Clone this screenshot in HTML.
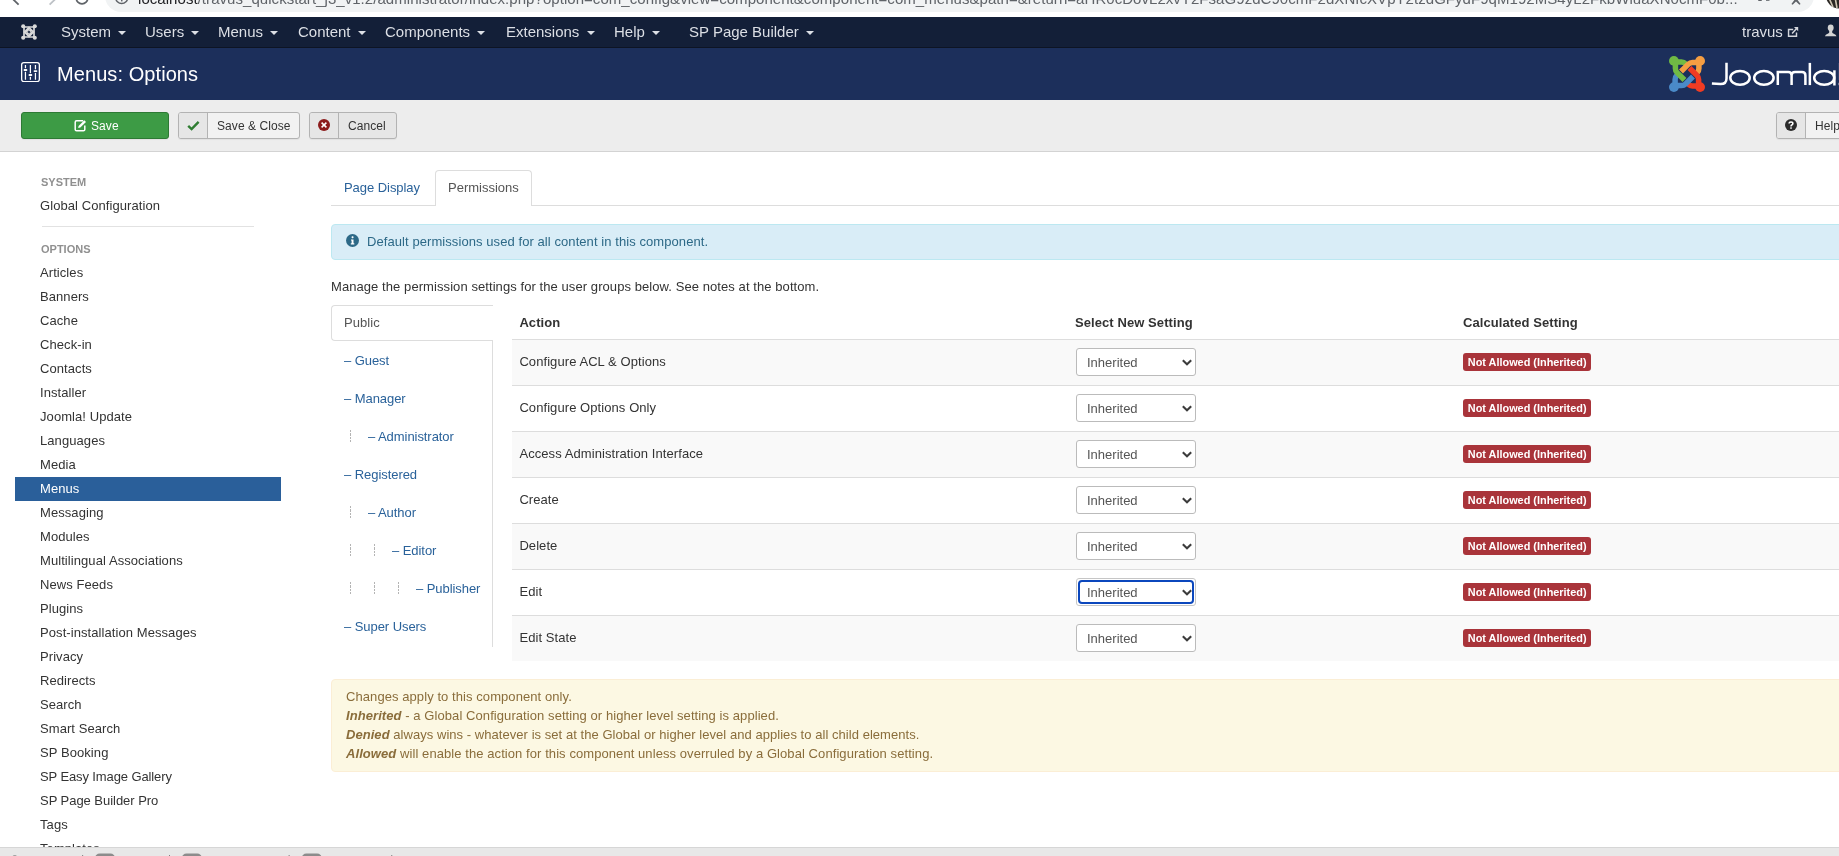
<!DOCTYPE html>
<html>
<head>
<meta charset="utf-8">
<title>Menus: Options</title>
<style>
*{box-sizing:border-box;margin:0;padding:0}
html,body{width:1839px;height:856px;overflow:hidden;background:#fff}
body{font-family:"Liberation Sans",sans-serif;font-size:13px;line-height:18px;color:#333;position:relative;letter-spacing:0.075px}
#root{position:absolute;left:0;top:0;width:1839px;height:856px;overflow:hidden;will-change:transform}
.abs{position:absolute}
/* browser chrome */
#chrome{left:0;top:0;width:1839px;height:17px;background:#fff;overflow:hidden}
#urlbar{left:105px;top:-20px;width:1709px;height:32px;border-radius:16px;background:#f1f3f4}
#url{left:138px;top:-10px;width:1587px;overflow:hidden;font-size:15px;line-height:18px;white-space:nowrap;color:#5f6368;letter-spacing:0.05px}
#url b{font-weight:normal;color:#202124}
/* nav */
#nav{left:0;top:17px;width:1839px;height:31px;background:#131f38;border-bottom:1px solid #0d1424}
#nav .mi{position:absolute;top:6px;font-size:15px;line-height:18px;color:#dcdfe5;white-space:nowrap;letter-spacing:0}
#nav .car{display:inline-block;width:0;height:0;border-left:4px solid transparent;border-right:4px solid transparent;border-top:4px solid #dcdfe5;vertical-align:middle;margin-left:3px;margin-top:-1px}
/* header */
#header{left:0;top:48px;width:1839px;height:52px;background:#1c2f5b}
#title{left:57px;top:62px;font-size:20px;line-height:24px;color:#fff;white-space:nowrap}
/* toolbar */
#toolbar{left:0;top:100px;width:1839px;height:52px;background:#ededed;border-bottom:1px solid #d3d3d3}
.btn{position:absolute;top:112px;height:27px;border:1px solid #b3b3b3;border-radius:3px;background:#e6e6e6;font-size:12px;line-height:18px;color:#333;white-space:nowrap;overflow:hidden;box-shadow:0 1px 1px rgba(0,0,0,.05)}
.btn .ic{position:absolute;left:0;top:0;bottom:0;width:29px;background:#e6e6e6;border-right:1px solid #b3b3b3}
.btn .tx{position:absolute;top:4px}
/* sidebar */
.sh{position:absolute;left:41px;font-size:11px;font-weight:bold;color:#909090;line-height:18px;letter-spacing:0}
.si{position:absolute;left:40px;color:#333;white-space:nowrap;line-height:18px}
/* content */
a,.lnk{color:#2a629a}

/* tabs */
#tabline{left:331px;top:205px;width:1520px;height:1px;background:#ddd}
#tab1{left:344px;top:179px;color:#2a629a;letter-spacing:-0.05px}
#tab2{left:435px;top:170px;width:97px;height:36px;border:1px solid #ddd;border-bottom:0;border-radius:4px 4px 0 0;background:#fff}
#tab2 span{position:absolute;left:12px;top:8px;color:#555;letter-spacing:0}
#info{left:331px;top:224px;width:1530px;height:36px;background:#d9edf7;border:1px solid #bce8f1;border-radius:4px;color:#2d6987}
#info span{position:absolute;left:35px;top:8px;white-space:nowrap}
#manage{left:331px;top:278px;white-space:nowrap;color:#333}
#pub{left:331px;top:305px;width:162px;height:36px;border:1px solid #ddd;border-right:0;border-radius:4px 0 0 4px;background:#fff}
#pub span{position:absolute;left:12px;top:8px;color:#555}
#vline{left:492px;top:340px;width:1px;height:307px;background:#ddd}
.g{position:absolute;color:#2a629a;white-space:nowrap;letter-spacing:-0.06px}
.lv{position:absolute;width:1px;height:12.2px;background:repeating-linear-gradient(to bottom,#b4b4b4 0,#b4b4b4 2.2px,transparent 2.2px,transparent 3.33px)}
/* table */
.th{position:absolute;top:314px;font-weight:bold;color:#333;white-space:nowrap}
.row{position:absolute;left:512px;width:1340px;height:46px;border-top:1px solid #ddd}
.row.odd{background:#f9f9f9}
.row .a{position:absolute;left:7.4px;top:13px;white-space:nowrap}
.sel{position:absolute;left:564px;top:8px;width:120px;height:28px;border:1px solid #bbb;border-radius:3px;background:#fff}
.sel span{position:absolute;left:10px;top:5px;font-size:13px;color:#555;line-height:18px;letter-spacing:0}
.sel svg{position:absolute;left:105px;top:9.5px}
.lab{position:absolute;left:951.4px;top:13px;width:127.6px;height:17.5px;border-radius:3px;background:#a9343a;color:#fff;font-weight:bold;font-size:10.9px;line-height:18px;letter-spacing:0;text-align:center;white-space:nowrap}
.sel.focus{border-color:#c6c6c6}
.sel.focus:after{content:"";position:absolute;left:1px;top:1px;right:1px;bottom:1px;border:2px solid #0b47bd;border-radius:4px}
#warn{left:331px;top:679px;width:1530px;height:93px;background:#fcf8e3;border:1px solid #fbeed5;border-radius:4px;color:#8a6d3b;line-height:19px}
#warn div{position:absolute;left:14px;white-space:nowrap}
#status{left:0;top:847px;width:1839px;height:9px;background:#e8e8e8;border-top:1px solid #d6d6d6}
</style>
</head>
<body>
<div id="root">
<!-- browser chrome strip -->
<div id="chrome" class="abs">
  <div id="urlbar" class="abs"></div>
  <svg class="abs" style="left:0;top:0" width="1839" height="17" viewBox="0 0 1839 17">
    <path d="M12.8 -1 L18.6 4.6" stroke="#5f6368" stroke-width="1.8" fill="none"/>
    <path d="M55.4 -1 L49.6 4.6" stroke="#bdc1c6" stroke-width="1.8" fill="none"/>
    <circle cx="82" cy="-2" r="5.8" stroke="#5f6368" stroke-width="1.7" fill="none"/>
    <circle cx="121.7" cy="-2.4" r="6" stroke="#5f6368" stroke-width="1.5" fill="none"/>
    <rect x="121" y="-3" width="1.5" height="4.4" fill="#5f6368"/>
    <rect x="1758" y="-1" width="4" height="2" rx="1" fill="#5f6368"/>
    <rect x="1766" y="-1" width="3.5" height="1.8" fill="#5f6368"/>
    <path d="M1796 -1 L1792 4.4 M1796 -1 L1800 4.4 M1796 0.5 L1792.4 3.9 M1796 0.5 L1799.6 3.9" stroke="#5f6368" stroke-width="1.4" fill="none"/>
    <circle cx="1839" cy="-4.5" r="13" fill="#2b2724"/>
    <path d="M1829 -2 L1833 7 M1835 -3 L1837 8" stroke="#cfc6b4" stroke-width="1.6" fill="none"/>
  </svg>
  <div id="url" class="abs"><b>localhost</b>/travus_quickstart_j3_v1.2/administrator/index.php?option=com_config&amp;view=component&amp;component=com_menus&amp;path=&amp;return=aHR0cDovL2xvY2FsaG9zdC90cmF2dXNfcXVpY2tzdGFydF9qM192MS4yL2FkbWluaXN0cmF0b3IvaW5kZXgucGhwP29wdGlvbj1jb21fbWVudXM</div>
  <div class="abs" style="left:1725px;top:-10px;font-size:15px;line-height:18px;color:#5f6368">...</div>
</div>

<div id="nav" class="abs">
  <svg class="abs" style="left:21px;top:7px" width="16" height="16" viewBox="0 0 16 16"><g fill="none" stroke="#d9d9d9"><rect x="3" y="3" width="10" height="10" rx="1.2" stroke-width="1.7"/><path d="M8 4.5 L11.5 8 L8 11.5 L4.5 8 Z" stroke-width="3.1" stroke-linejoin="miter"/></g><g fill="#d9d9d9"><circle cx="2.2" cy="2.2" r="2.05"/><circle cx="13.8" cy="2.2" r="2.05"/><circle cx="2.2" cy="13.8" r="2.05"/><circle cx="13.8" cy="13.8" r="2.05"/></g><path d="M5.2 8.9 L8.9 5.2 M7.1 10.8 L10.8 7.1" stroke="#131f38" stroke-width="0.35" opacity="0.6"/></svg>
  <div class="mi" style="left:61px">System <i class="car"></i></div>
  <div class="mi" style="left:145px">Users <i class="car"></i></div>
  <div class="mi" style="left:218px">Menus <i class="car"></i></div>
  <div class="mi" style="left:298px">Content <i class="car"></i></div>
  <div class="mi" style="left:385px">Components <i class="car"></i></div>
  <div class="mi" style="left:506px">Extensions <i class="car"></i></div>
  <div class="mi" style="left:614px">Help <i class="car"></i></div>
  <div class="mi" style="left:689px">SP Page Builder <i class="car"></i></div>
  <div class="mi" style="left:1742px">travus</div>
  <svg class="abs" style="left:1786px;top:8px" width="14" height="14" viewBox="0 0 14 14"><path d="M7.2 4.5 H2.55 V11.3 H10.5 V7.6" fill="none" stroke="#d3d6dc" stroke-width="1.45"/><path d="M6.1 8.4 L10.6 3.6" stroke="#d3d6dc" stroke-width="1.5" fill="none"/><path d="M7.9 2 H12.2 V6.3 Z" fill="#d3d6dc"/></svg>
  <svg class="abs" style="left:1824px;top:7px" width="14" height="13" viewBox="0 0 14 13"><ellipse cx="6.7" cy="3.8" rx="2.95" ry="3.4" fill="#d3d3d3"/><path d="M5.2 6 H8.2 V8.6 Q8.3 9.2 9.3 9.6 Q12.2 10.6 12.5 12.2 H0.9 Q1.2 10.6 4.1 9.6 Q5.1 9.2 5.2 8.6 Z" fill="#d3d3d3"/></svg>
</div>
<div id="header" class="abs"></div>
<svg class="abs" style="left:21px;top:62px" width="19" height="20" viewBox="0 0 19 20"><rect x="0.65" y="0.65" width="17.7" height="18.9" rx="2.2" fill="none" stroke="#fff" stroke-width="1.3"/><g stroke="#fff" stroke-width="1.25"><path d="M4.45 3 V17.8 M9.4 3 V17.8 M14.45 3 V17.8"/></g><g fill="#1c2f5b"><rect x="3" y="6.2" width="3" height="3.6"/><rect x="8" y="11.2" width="3" height="3.6"/><rect x="13" y="7.3" width="3" height="3.6"/></g><g fill="#fff"><rect x="2.6" y="7.1" width="3.7" height="1.9" rx="0.8"/><rect x="7.55" y="12.1" width="3.7" height="1.9" rx="0.8"/><rect x="12.6" y="8.2" width="3.7" height="1.9" rx="0.8"/></g></svg>
<svg class="abs" style="left:1669px;top:56px;overflow:visible" width="36" height="36" viewBox="0 0 36 36"><g transform="rotate(0 18 18)" fill="none" stroke="#70ba44" stroke-width="5.5" stroke-linejoin="round"><circle cx="4.9" cy="4.9" r="4.9" fill="#70ba44" stroke="none"/><path d="M5 6.1 L12.5 6.1 Q15 6.1 16.8 7.9 L19 10.1"/></g><g transform="rotate(90 18 18)" fill="none" stroke="#f59e42" stroke-width="5.5" stroke-linejoin="round"><circle cx="4.9" cy="4.9" r="4.9" fill="#f59e42" stroke="none"/><path d="M5 6.1 L12.5 6.1 Q15 6.1 16.8 7.9 L19 10.1"/></g><g transform="rotate(180 18 18)" fill="none" stroke="#f03c23" stroke-width="5.5" stroke-linejoin="round"><circle cx="4.9" cy="4.9" r="4.9" fill="#f03c23" stroke="none"/><path d="M5 6.1 L12.5 6.1 Q15 6.1 16.8 7.9 L19 10.1"/></g><g transform="rotate(270 18 18)" fill="none" stroke="#4a8ac8" stroke-width="5.5" stroke-linejoin="round"><circle cx="4.9" cy="4.9" r="4.9" fill="#4a8ac8" stroke="none"/><path d="M5 6.1 L12.5 6.1 Q15 6.1 16.8 7.9 L19 10.1"/></g><g transform="rotate(0 18 18)" fill="none" stroke="#70ba44" stroke-width="5.5" stroke-linejoin="round"><path d="M6.4 5 L6.4 12.5 Q6.4 14.9 8.1 16.6 L15.5 24"/></g><g transform="rotate(90 18 18)" fill="none" stroke="#f59e42" stroke-width="5.5" stroke-linejoin="round"><path d="M6.4 5 L6.4 12.5 Q6.4 14.9 8.1 16.6 L15.5 24"/></g><g transform="rotate(180 18 18)" fill="none" stroke="#f03c23" stroke-width="5.5" stroke-linejoin="round"><path d="M6.4 5 L6.4 12.5 Q6.4 14.9 8.1 16.6 L15.5 24"/></g><g transform="rotate(270 18 18)" fill="none" stroke="#4a8ac8" stroke-width="5.5" stroke-linejoin="round"><path d="M6.4 5 L6.4 12.5 Q6.4 14.9 8.1 16.6 L15.5 24"/></g></svg>
<svg class="abs" style="left:1669px;top:56px" width="170" height="36" viewBox="0 0 170 36"><g fill="none" stroke="#fff" stroke-width="2.5"><path d="M57.5 6.8 V22.5 Q57.5 28.1 51.5 28.1 L42.9 27.6"/><ellipse cx="71" cy="21.85" rx="9.7" ry="6.9"/><ellipse cx="94.9" cy="21.85" rx="9.7" ry="6.9"/><path d="M108.8 29.1 V16 H119.2 Q122.6 16 122.6 19.4 V29.1 M122.6 19.4 Q122.6 16 126 16 H133 Q136.4 16 136.4 19.4 V29.1"/><path d="M140.85 6.9 V29.1"/><ellipse cx="155.2" cy="21.85" rx="10" ry="6.9"/><path d="M165.4 14.3 V29.5"/></g><rect x="169.2" y="7" width="3" height="17" fill="#fff" opacity="0.12"/><rect x="169.2" y="26.8" width="3" height="2.4" fill="#fff" opacity="0.45"/></svg>
<div id="title" class="abs">Menus: Options</div>
<div id="toolbar" class="abs"></div>
<!-- toolbar buttons -->
<div class="btn" style="left:21px;width:148px;background:#3d9b45;border-color:#2d7a34;color:#fff">
  <svg class="abs" style="left:51.5px;top:5.6px" width="13" height="13" viewBox="0 0 13 13"><path d="M9.2 1.8 H2.6 Q1.2 1.8 1.2 3.2 V10.4 Q1.2 11.8 2.6 11.8 H9.4 Q10.8 11.8 10.8 10.4 V6.6" fill="none" stroke="#fff" stroke-width="1.5"/><path d="M4.6 6.9 L10.3 1.2 L12 2.9 L6.3 8.6 L4.2 9 Z" fill="#fff"/></svg>
  <span class="tx" style="left:69px">Save</span>
</div>
<div class="btn" style="left:178px;width:122px;background:#f2f2f2">
  <div class="ic"></div>
  <svg class="abs" style="left:8px;top:7px" width="13" height="11" viewBox="0 0 13 11"><path d="M1.2 5.8 L4.6 9 L11.6 1.8" fill="none" stroke="#2f7d32" stroke-width="2.4"/></svg>
  <span class="tx" style="left:38px">Save &amp; Close</span>
</div>
<div class="btn" style="left:309px;width:88px">
  <div class="ic"></div>
  <svg class="abs" style="left:8px;top:6px" width="12" height="12" viewBox="0 0 12 12"><circle cx="6" cy="6" r="6" fill="#8c1c1c"/><path d="M3.6 3.6 L8.4 8.4 M8.4 3.6 L3.6 8.4" stroke="#fff" stroke-width="1.5"/></svg>
  <span class="tx" style="left:38px">Cancel</span>
</div>
<div class="btn" style="left:1776px;width:90px;background:#f2f2f2">
  <div class="ic"></div>
  <svg class="abs" style="left:8px;top:6px" width="12" height="12" viewBox="0 0 12 12"><circle cx="6" cy="6" r="6" fill="#2b2b2b"/><path d="M4.1 4.6 Q4.1 2.9 6 2.9 Q7.9 2.9 7.9 4.5 Q7.9 5.5 6.8 6 Q6 6.4 6 7.4" fill="none" stroke="#fff" stroke-width="1.5"/><rect x="5.25" y="8.3" width="1.5" height="1.5" fill="#fff"/></svg>
  <span class="tx" style="left:38px">Help</span>
</div>

<!-- sidebar -->
<div class="sh" style="top:173px">SYSTEM</div>
<div class="si" style="top:197px">Global Configuration</div>
<div class="abs" style="left:42px;top:226px;width:212px;height:1px;background:#e2e2e2"></div>
<div class="sh" style="top:240px">OPTIONS</div>
<div class="abs" style="left:15px;top:477px;width:266px;height:24px;background:#2a5f9a"></div>
<div class="si" style="top:264px">Articles</div>
<div class="si" style="top:288px">Banners</div>
<div class="si" style="top:312px">Cache</div>
<div class="si" style="top:336px">Check-in</div>
<div class="si" style="top:360px">Contacts</div>
<div class="si" style="top:384px">Installer</div>
<div class="si" style="top:408px">Joomla! Update</div>
<div class="si" style="top:432px">Languages</div>
<div class="si" style="top:456px">Media</div>
<div class="si" style="top:480px;color:#fff">Menus</div>
<div class="si" style="top:504px">Messaging</div>
<div class="si" style="top:528px">Modules</div>
<div class="si" style="top:552px">Multilingual Associations</div>
<div class="si" style="top:576px">News Feeds</div>
<div class="si" style="top:600px">Plugins</div>
<div class="si" style="top:624px">Post-installation Messages</div>
<div class="si" style="top:648px">Privacy</div>
<div class="si" style="top:672px">Redirects</div>
<div class="si" style="top:696px">Search</div>
<div class="si" style="top:720px">Smart Search</div>
<div class="si" style="top:744px">SP Booking</div>
<div class="si" style="top:768px;letter-spacing:-0.11px">SP Easy Image Gallery</div>
<div class="si" style="top:792px;letter-spacing:-0.04px">SP Page Builder Pro</div>
<div class="si" style="top:816px">Tags</div>
<div class="si" style="top:840px">Templates</div>

<!-- content -->
<div id="tabline" class="abs"></div>
<div id="tab1" class="abs">Page Display</div>
<div id="tab2" class="abs"><span>Permissions</span></div>
<div id="info" class="abs"><svg class="abs" style="left:13.9px;top:8.7px" width="13" height="13" viewBox="0 0 13 13"><circle cx="6.5" cy="6.5" r="6.5" fill="#2d6987"/><rect x="5.6" y="2.3" width="1.9" height="1.9" rx="0.6" fill="#fff"/><path d="M5 5.4 H7.5 V9.3 H8.3 V10.5 H4.8 V9.3 H5.6 V6.6 H5 Z" fill="#fff"/></svg><span>Default permissions used for all content in this component.</span></div>
<div id="manage" class="abs">Manage the permission settings for the user groups below. See notes at the bottom.</div>
<div id="pub" class="abs"><span>Public</span></div>
<div id="vline" class="abs"></div>
<div class="g" style="left:344px;top:352px">&ndash; Guest</div>
<div class="g" style="left:344px;top:390px">&ndash; Manager</div>
<div class="g" style="left:368px;top:428px">&ndash; Administrator</div>
<div class="lv" style="left:350px;top:430px"></div>
<div class="g" style="left:344px;top:466px">&ndash; Registered</div>
<div class="g" style="left:368px;top:504px">&ndash; Author</div>
<div class="lv" style="left:350px;top:506px"></div>
<div class="g" style="left:392px;top:542px">&ndash; Editor</div>
<div class="lv" style="left:350px;top:544px"></div>
<div class="lv" style="left:374px;top:544px"></div>
<div class="g" style="left:416px;top:580px">&ndash; Publisher</div>
<div class="lv" style="left:350px;top:582px"></div>
<div class="lv" style="left:374px;top:582px"></div>
<div class="lv" style="left:398px;top:582px"></div>
<div class="g" style="left:344px;top:618px">&ndash; Super Users</div>
<div class="th" style="left:519.4px">Action</div>
<div class="th" style="left:1075px">Select New Setting</div>
<div class="th" style="left:1463px">Calculated Setting</div>
<div class="row odd" style="top:339px"><span class="a">Configure ACL &amp; Options</span><div class="sel"><span>Inherited</span><svg width="10" height="8" viewBox="0 0 10 8"><path d="M0.8 1.3 L5 5.2 L9.2 1.3" fill="none" stroke="#3c3c3c" stroke-width="2.1"/></svg></div><div class="lab">Not Allowed (Inherited)</div></div>
<div class="row" style="top:385px"><span class="a">Configure Options Only</span><div class="sel"><span>Inherited</span><svg width="10" height="8" viewBox="0 0 10 8"><path d="M0.8 1.3 L5 5.2 L9.2 1.3" fill="none" stroke="#3c3c3c" stroke-width="2.1"/></svg></div><div class="lab">Not Allowed (Inherited)</div></div>
<div class="row odd" style="top:431px"><span class="a">Access Administration Interface</span><div class="sel"><span>Inherited</span><svg width="10" height="8" viewBox="0 0 10 8"><path d="M0.8 1.3 L5 5.2 L9.2 1.3" fill="none" stroke="#3c3c3c" stroke-width="2.1"/></svg></div><div class="lab">Not Allowed (Inherited)</div></div>
<div class="row" style="top:477px"><span class="a">Create</span><div class="sel"><span>Inherited</span><svg width="10" height="8" viewBox="0 0 10 8"><path d="M0.8 1.3 L5 5.2 L9.2 1.3" fill="none" stroke="#3c3c3c" stroke-width="2.1"/></svg></div><div class="lab">Not Allowed (Inherited)</div></div>
<div class="row odd" style="top:523px"><span class="a">Delete</span><div class="sel"><span>Inherited</span><svg width="10" height="8" viewBox="0 0 10 8"><path d="M0.8 1.3 L5 5.2 L9.2 1.3" fill="none" stroke="#3c3c3c" stroke-width="2.1"/></svg></div><div class="lab">Not Allowed (Inherited)</div></div>
<div class="row" style="top:569px"><span class="a">Edit</span><div class="sel focus"><span>Inherited</span><svg width="10" height="8" viewBox="0 0 10 8"><path d="M0.8 1.3 L5 5.2 L9.2 1.3" fill="none" stroke="#3c3c3c" stroke-width="2.1"/></svg></div><div class="lab">Not Allowed (Inherited)</div></div>
<div class="row odd" style="top:615px"><span class="a">Edit State</span><div class="sel"><span>Inherited</span><svg width="10" height="8" viewBox="0 0 10 8"><path d="M0.8 1.3 L5 5.2 L9.2 1.3" fill="none" stroke="#3c3c3c" stroke-width="2.1"/></svg></div><div class="lab">Not Allowed (Inherited)</div></div>
<div id="warn" class="abs">
<div style="top:7px">Changes apply to this component only.</div>
<div style="top:26px"><b><i>Inherited</i></b> - a Global Configuration setting or higher level setting is applied.</div>
<div style="top:45px;letter-spacing:0.047px"><b><i>Denied</i></b> always wins - whatever is set at the Global or higher level and applies to all child elements.</div>
<div style="top:64px"><b><i>Allowed</i></b> will enable the action for this component unless overruled by a Global Configuration setting.</div>
</div>
<div id="status" class="abs">
<svg class="abs" style="left:0;top:0" width="420" height="9" viewBox="0 0 420 9"><g fill="#8c8c8c"><rect x="94.8" y="5.6" width="20.5" height="10" rx="5"/><rect x="181.6" y="5.6" width="20.5" height="10" rx="5"/><rect x="301.5" y="5.6" width="20.5" height="10" rx="5"/><rect x="12.5" y="7.3" width="4.5" height="3" rx="1.5"/></g><g fill="#666"><rect x="82.3" y="7" width="0.8" height="2"/><rect x="169.2" y="7" width="0.8" height="2"/><rect x="288.7" y="7" width="0.8" height="2"/><rect x="391.4" y="7" width="0.8" height="2"/></g></svg>
</div>

</div>
</body>
</html>
